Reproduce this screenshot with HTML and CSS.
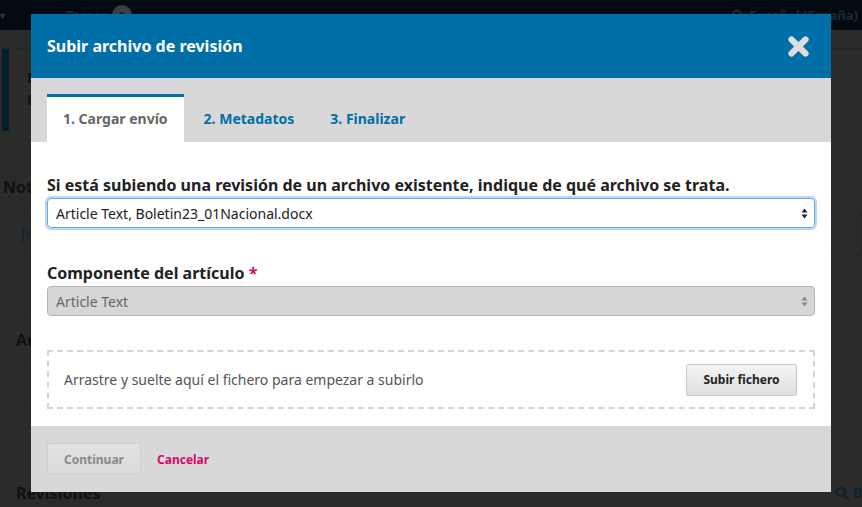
FILE: index.html
```html
<!DOCTYPE html>
<html lang="es">
<head>
<meta charset="utf-8">
<title>Subir archivo de revisión</title>
<link rel="stylesheet" href="styles.css">
</head>
<body>
<div class="page">
  <div class="topbar">
    <span class="caret">▾</span>
    <span class="tasks">Tareas <span class="badge">0</span></span>
    <span class="lang"><svg class="globe" width="12" height="12" viewBox="0 0 12 12"><circle cx="5" cy="5" r="3.6" fill="none" stroke="#1e2a34" stroke-width="1.8"/><path d="M7.6 7.6 L11 11" stroke="#1e2a34" stroke-width="2"/></svg>Español (España)</span>
  </div>
  <div class="pagebody">
    <div class="notice">
      <div class="strip"></div>
      <div class="notice-text"><div>E</div><div>E</div></div>
    </div>
    <div class="bg-h">Notas</div>
    <div class="bg-box"><span class="bg-link">[n</span></div>
    <div class="bg-section">
      <div class="bg-sec-head"><span class="bg-h2">Ar</span></div>
    </div>
    <div class="bg-rev"><span class="bg-h3">Revisiones</span><span class="bg-search"><svg width="14" height="14" viewBox="0 0 14 14"><circle cx="6" cy="6" r="4.2" fill="none" stroke="#0e2232" stroke-width="2.2"/><path d="M9 9 L13 13" stroke="#0e2232" stroke-width="2.4"/></svg> B</span></div>
  </div>
</div>

<div class="modal">
  <div class="modal-header">
    <h2 class="modal-title">Subir archivo de revisión</h2>
    <svg class="close" width="23" height="23" viewBox="0 0 23 23">
      <path d="M4.5 4.5 L18.5 18.5 M18.5 4.5 L4.5 18.5" stroke="#dddddd" stroke-width="6.2" stroke-linecap="round"/>
    </svg>
  </div>
  <div class="tabs">
    <div class="tab active">1. Cargar envío</div>
    <div class="tab">2. Metadatos</div>
    <div class="tab">3. Finalizar</div>
  </div>
  <div class="modal-body">
    <label class="label">Si está subiendo una revisión de un archivo existente, indique de qué archivo se trata.</label>
    <div class="select focus">
      <span>Article Text, Boletin23_01Nacional.docx</span>
      <svg class="arrows" width="7" height="11" viewBox="0 0 7 11"><path d="M3.5 0.5 L6.5 4.5 L0.5 4.5 Z M3.5 10.5 L6.5 6.5 L0.5 6.5 Z" fill="#222"/></svg>
    </div>
    <label class="label second">Componente del artículo <span class="req">*</span></label>
    <div class="select disabled">
      <span>Article Text</span>
      <svg class="arrows" width="7" height="11" viewBox="0 0 7 11"><path d="M3.5 0.5 L6.5 4.5 L0.5 4.5 Z M3.5 10.5 L6.5 6.5 L0.5 6.5 Z" fill="#888"/></svg>
    </div>
    <div class="dropzone">
      <span class="drop-text">Arrastre y suelte aquí el fichero para empezar a subirlo</span>
      <button class="btn upload">Subir fichero</button>
    </div>
  </div>
  <div class="modal-footer">
    <button class="btn continue">Continuar</button>
    <a class="cancel">Cancelar</a>
  </div>
</div>
</body>
</html>
```

FILE: styles.css
```css
* { box-sizing: border-box; }
html, body { margin: 0; padding: 0; }
body {
  width: 862px;
  height: 507px;
  overflow: hidden;
  position: relative;
  background: #2b2b2b;
  font-family: "Noto Sans", "Open Sans", sans-serif;
}

/* dimmed background page */
.page { width: 862px; height: 507px; }
.topbar {
  height: 30px;
  background: #030b12;
  display: flex;
  align-items: center;
  font-size: 13px;
  font-weight: 700;
  color: #1e2a34;
  padding: 0 4px 0 0;
}
.caret { width: 66px; color: #2a3640; font-size: 10px; }
.tasks { display: flex; align-items: center; gap: 4px; }
.badge {
  display: inline-flex; align-items: center; justify-content: center;
  width: 20px; height: 20px; border-radius: 50%;
  background: #3a3f44; color: #15191c; font-size: 11px;
}
.lang { margin-left: auto; display: flex; align-items: center; gap: 6px; }
.pagebody { padding: 18px 0 0 0; }
.notice {
  display: flex;
  height: 83px;
  border-top: 1px solid #252525;
}
.strip { width: 7px; margin-left: 2px; background: #00202c; }
.notice-text { padding: 18px 0 0 18px; font-weight: 700; color: #111; font-size: 14px; line-height: 22px; }
.bg-h { margin: 45px 0 0 3px; font-weight: 700; font-size: 16px; line-height: 22px; color: #111; }
.bg-box {
  margin: 14px 0 0 2px;
  height: 41px;
  border: 1px solid #262626;
  padding: 9px 0 0 18px;
}
.bg-link { color: #0c2233; font-size: 15px; }
.bg-section {
  margin-top: 62px;
  height: 89px;
  border-top: 1px solid #262626;
  border-bottom: 1px solid #262626;
}
.bg-sec-head {
  height: 48px;
  border-bottom: 1px solid #262626;
  padding: 13px 0 0 16px;
}
.bg-h2 { font-weight: 700; font-size: 16px; color: #111; }
.bg-rev {
  margin-top: 78px;
  display: flex;
  justify-content: space-between;
  padding: 0 0 0 16px;
  line-height: 22px;
}
.bg-h3 { font-weight: 700; font-size: 16px; color: #111; }
.bg-search { font-weight: 700; color: #0e2232; font-size: 14px; display: flex; align-items: center; gap: 4px; }

/* modal */
.modal {
  position: absolute;
  left: 31px;
  top: 14px;
  width: 800px;
  background: #fff;
}
.modal-header {
  height: 64px;
  background: #006fa8;
  display: flex;
  align-items: center;
  justify-content: space-between;
  padding: 0 21px 0 16px;
}
.modal-title {
  margin: 0;
  color: #fff;
  font-size: 16px;
  font-weight: 700;
}
.tabs {
  background: #d8d8d8;
  padding: 16px 16px 0;
  display: flex;
  gap: 4px;
}
.tab {
  height: 48px;
  padding: 3px 16px 3px;
  display: flex;
  align-items: center;
  font-size: 14px;
  font-weight: 700;
  color: #006fa8;
}
.tab.active {
  background: #fff;
  border-top: 3px solid #006fa8;
  padding-top: 0;
  color: #666;
}
.modal-body {
  padding: 32px 16px 17px;
}
.label {
  display: block;
  font-size: 16px;
  font-weight: 700;
  color: #222;
  line-height: 22px;
  margin-bottom: 2px;
}
.label.second { margin-top: 34px; }
.req { color: #d00a6c; }
.select {
  height: 30px;
  border-radius: 4px;
  display: flex;
  align-items: center;
  justify-content: space-between;
  padding: 0 6px 0 8px;
  font-size: 14px;
}
.select.focus {
  border: 1px solid #6fa9ec;
  box-shadow: 0 0 0 2px #b9d5f7;
  color: #222;
}
.select.disabled {
  background: #d6d6d6;
  border: 1px solid #b5b5b5;
  color: #666;
}
.dropzone {
  margin-top: 34px;
  height: 59px;
  border: 2px dashed #d4d4d4;
  display: flex;
  align-items: center;
  justify-content: space-between;
  padding: 0 16px 0 15px;
}
.drop-text { font-size: 14px; color: #555; }
.btn {
  font-family: "Noto Sans", "Open Sans", sans-serif;
  font-weight: 700;
  font-size: 12px;
  border: 1px solid #c8c8c8;
  border-radius: 2px;
  background: linear-gradient(#f4f4f4, #dedede);
  color: #222;
  height: 32px;
  padding: 0 16px;
}
.upload { width: 111px; }
.modal-footer {
  background: #d8d8d8;
  height: 66px;
  display: flex;
  align-items: center;
  padding: 0 16px;
  gap: 16px;
}
.continue {
  width: 94px;
  color: #8a8a8a;
  background: linear-gradient(#e2e2e2, #d9d9d9);
  border-color: #cfcfcf;
}
.cancel {
  color: #d00a6c;
  font-weight: 700;
  font-size: 12px;
}
```
